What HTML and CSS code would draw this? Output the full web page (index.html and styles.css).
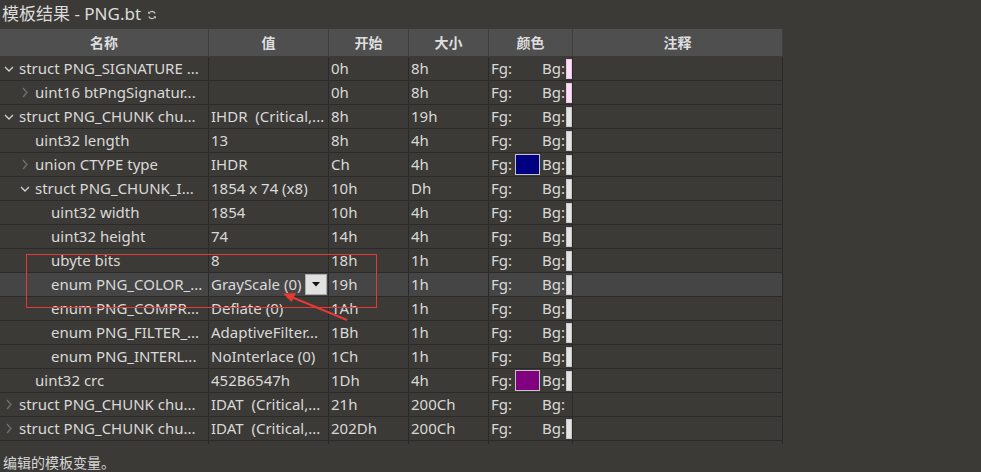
FILE: index.html
```html
<!DOCTYPE html>
<html lang="zh">
<head>
<meta charset="utf-8">
<title>模板结果</title>
<link rel="stylesheet" href="styles.css">
</head>
<body>
<div class="panel">
  <div class="title">模板结果 - PNG.bt
    <svg class="refresh" width="10" height="10" viewBox="0 0 10 10"><path d="M8.2 3.6A3.4 3.4 0 0 0 2.2 3" fill="none" stroke="#bdbdbd" stroke-width="1.3"/><path d="M1.8 6.4A3.4 3.4 0 0 0 7.8 7" fill="none" stroke="#bdbdbd" stroke-width="1.3"/><path d="M1 1.2v2.6h2.6z" fill="#bdbdbd"/><path d="M9 8.8V6.2H6.4z" fill="#bdbdbd"/></svg>
  </div>
  <div class="grid">
    <div class="row head">
      <div class="c">名称</div><div class="c">值</div><div class="c">开始</div><div class="c">大小</div><div class="c">颜色</div><div class="c">注释</div>
    </div>

    <div class="row">
      <div class="c name l0"><span class="tw open"><svg width="10" height="6" viewBox="0 0 10 6"><path d="M1 1l4 4 4-4" fill="none" stroke="currentColor" stroke-width="1.4"/></svg></span>struct PNG_SIGNATURE ...</div>
      <div class="c"></div><div class="c">0h</div><div class="c">8h</div>
      <div class="c col"><span class="fg">Fg:</span><span class="slot"></span><span class="bg">Bg:</span><span class="bsw pink"></span></div><div class="c"></div>
    </div>
    <div class="row">
      <div class="c name l1"><span class="tw shut"><svg width="6" height="11" viewBox="0 0 6 11"><path d="M1 1l4 4.5-4 4.5" fill="none" stroke="currentColor" stroke-width="1.4"/></svg></span>uint16 btPngSignatur...</div>
      <div class="c"></div><div class="c">0h</div><div class="c">8h</div>
      <div class="c col"><span class="fg">Fg:</span><span class="slot"></span><span class="bg">Bg:</span><span class="bsw pink"></span></div><div class="c"></div>
    </div>
    <div class="row">
      <div class="c name l0"><span class="tw open"><svg width="10" height="6" viewBox="0 0 10 6"><path d="M1 1l4 4 4-4" fill="none" stroke="currentColor" stroke-width="1.4"/></svg></span>struct PNG_CHUNK chu...</div>
      <div class="c">IHDR&nbsp; (Critical,...</div><div class="c">8h</div><div class="c">19h</div>
      <div class="c col"><span class="fg">Fg:</span><span class="slot"></span><span class="bg">Bg:</span><span class="bsw"></span></div><div class="c"></div>
    </div>
    <div class="row">
      <div class="c name l1"><span class="tw"></span>uint32 length</div>
      <div class="c">13</div><div class="c">8h</div><div class="c">4h</div>
      <div class="c col"><span class="fg">Fg:</span><span class="slot"></span><span class="bg">Bg:</span><span class="bsw"></span></div><div class="c"></div>
    </div>
    <div class="row">
      <div class="c name l1"><span class="tw shut"><svg width="6" height="11" viewBox="0 0 6 11"><path d="M1 1l4 4.5-4 4.5" fill="none" stroke="currentColor" stroke-width="1.4"/></svg></span>union CTYPE type</div>
      <div class="c">IHDR</div><div class="c">Ch</div><div class="c">4h</div>
      <div class="c col"><span class="fg">Fg:</span><span class="slot"><span class="fsw navy"></span></span><span class="bg">Bg:</span><span class="bsw"></span></div><div class="c"></div>
    </div>
    <div class="row">
      <div class="c name l1"><span class="tw open"><svg width="10" height="6" viewBox="0 0 10 6"><path d="M1 1l4 4 4-4" fill="none" stroke="currentColor" stroke-width="1.4"/></svg></span>struct PNG_CHUNK_I...</div>
      <div class="c">1854 x 74 (x8)</div><div class="c">10h</div><div class="c">Dh</div>
      <div class="c col"><span class="fg">Fg:</span><span class="slot"></span><span class="bg">Bg:</span><span class="bsw"></span></div><div class="c"></div>
    </div>
    <div class="row">
      <div class="c name l2"><span class="tw"></span>uint32 width</div>
      <div class="c">1854</div><div class="c">10h</div><div class="c">4h</div>
      <div class="c col"><span class="fg">Fg:</span><span class="slot"></span><span class="bg">Bg:</span><span class="bsw"></span></div><div class="c"></div>
    </div>
    <div class="row">
      <div class="c name l2"><span class="tw"></span>uint32 height</div>
      <div class="c">74</div><div class="c">14h</div><div class="c">4h</div>
      <div class="c col"><span class="fg">Fg:</span><span class="slot"></span><span class="bg">Bg:</span><span class="bsw"></span></div><div class="c"></div>
    </div>
    <div class="row">
      <div class="c name l2"><span class="tw"></span>ubyte bits</div>
      <div class="c">8</div><div class="c">18h</div><div class="c">1h</div>
      <div class="c col"><span class="fg">Fg:</span><span class="slot"></span><span class="bg">Bg:</span><span class="bsw"></span></div><div class="c"></div>
    </div>
    <div class="row sel">
      <div class="c name l2"><span class="tw"></span>enum PNG_COLOR_...</div>
      <div class="c val-edit"><span>GrayScale (0)</span><span class="drop"><svg width="8" height="5" viewBox="0 0 8 5"><path d="M0 0h8L4 4.5z" fill="#111"/></svg></span></div><div class="c">19h</div><div class="c">1h</div>
      <div class="c col"><span class="fg">Fg:</span><span class="slot"></span><span class="bg">Bg:</span><span class="bsw"></span></div><div class="c"></div>
    </div>
    <div class="row">
      <div class="c name l2"><span class="tw"></span>enum PNG_COMPR...</div>
      <div class="c">Deflate (0)</div><div class="c">1Ah</div><div class="c">1h</div>
      <div class="c col"><span class="fg">Fg:</span><span class="slot"></span><span class="bg">Bg:</span><span class="bsw"></span></div><div class="c"></div>
    </div>
    <div class="row">
      <div class="c name l2"><span class="tw"></span>enum PNG_FILTER_...</div>
      <div class="c">AdaptiveFilter...</div><div class="c">1Bh</div><div class="c">1h</div>
      <div class="c col"><span class="fg">Fg:</span><span class="slot"></span><span class="bg">Bg:</span><span class="bsw"></span></div><div class="c"></div>
    </div>
    <div class="row">
      <div class="c name l2"><span class="tw"></span>enum PNG_INTERL...</div>
      <div class="c">NoInterlace (0)</div><div class="c">1Ch</div><div class="c">1h</div>
      <div class="c col"><span class="fg">Fg:</span><span class="slot"></span><span class="bg">Bg:</span><span class="bsw"></span></div><div class="c"></div>
    </div>
    <div class="row">
      <div class="c name l1"><span class="tw"></span>uint32 crc</div>
      <div class="c">452B6547h</div><div class="c">1Dh</div><div class="c">4h</div>
      <div class="c col"><span class="fg">Fg:</span><span class="slot"><span class="fsw purple"></span></span><span class="bg">Bg:</span><span class="bsw"></span></div><div class="c"></div>
    </div>
    <div class="row">
      <div class="c name l0"><span class="tw shut"><svg width="6" height="11" viewBox="0 0 6 11"><path d="M1 1l4 4.5-4 4.5" fill="none" stroke="currentColor" stroke-width="1.4"/></svg></span>struct PNG_CHUNK chu...</div>
      <div class="c">IDAT&nbsp; (Critical,...</div><div class="c">21h</div><div class="c">200Ch</div>
      <div class="c col"><span class="fg">Fg:</span><span class="slot"></span><span class="bg">Bg:</span></div><div class="c"></div>
    </div>
    <div class="row">
      <div class="c name l0"><span class="tw shut"><svg width="6" height="11" viewBox="0 0 6 11"><path d="M1 1l4 4.5-4 4.5" fill="none" stroke="currentColor" stroke-width="1.4"/></svg></span>struct PNG_CHUNK chu...</div>
      <div class="c">IDAT&nbsp; (Critical,...</div><div class="c">202Dh</div><div class="c">200Ch</div>
      <div class="c col"><span class="fg">Fg:</span><span class="slot"></span><span class="bg">Bg:</span><span class="bsw"></span></div><div class="c"></div>
    </div>
    <div class="row tail">
      <div class="c"></div><div class="c"></div><div class="c"></div><div class="c"></div><div class="c"></div><div class="c"></div>
    </div>

    <div class="mark"></div>
    <svg class="arrow" width="120" height="60" viewBox="0 0 120 60"><path d="M70 36L12 12" stroke="#e53935" stroke-width="2" fill="none"/><path d="M6 9.5l13 -0.5-4.5 9z" fill="#e53935"/></svg>
  </div>
  <div class="status">编辑的模板变量。</div>
</div>
</body>
</html>
```
FILE: styles.css
```css
* { box-sizing: border-box; }
html, body { margin: 0; padding: 0; }
body {
  background: #3c3a36;
  color: #d9d9d9;
  font-family: "Noto Sans", "Noto Sans CJK SC", sans-serif;
  font-size: 15px;
  width: 981px;
  height: 472px;
  overflow: hidden;
}
.panel { display: flex; flex-direction: column; }
.title {
  height: 29px;
  padding: 0 0 1px 2px;
  font-size: 17px;
  line-height: 26px;
  color: #dcdcdc;
  display: flex;
  align-items: center;
  gap: 6px;
}
.refresh { margin-top: 1px; }
.grid { position: relative; width: 783px; }
.row {
  display: grid;
  grid-template-columns: 209px 120px 80px 80px 84px 210px;
  height: 24px;
}
.c {
  border-right: 1px solid #2b2a28;
  border-bottom: 1px solid #2b2a28;
  padding-left: 2px;
  line-height: 23px;
  white-space: nowrap;
  overflow: hidden;
  display: flex;
  align-items: center;
}
.head { height: 28px; background: #4f4f4f; }
.head .c {
  justify-content: center;
  font-weight: bold;
  border-right: 1px solid #3f3f3f;
  border-bottom: 1px solid #3a3a3a;
  padding-left: 0;
  color: #dedede;
  font-size: 14px;
}
.sel { background: #454545; }
.tail { height: 3px; }
.tail .c { border-bottom: none; }
.name { padding-left: 0; }
.l1 { padding-left: 16px; }
.l2 { padding-left: 32px; }
.tw { width: 19px; flex: none; display: flex; align-items: center; }
.tw.open { color: #cfcfcf; padding-left: 4px; }
.tw.shut { color: #6f6f6f; padding-left: 6px; }
.col { padding-left: 2px; }
.fg { width: 24px; flex: none; }
.slot { width: 27px; flex: none; height: 23px; display: flex; align-items: center; }
.bg { width: 24px; flex: none; }
.bsw {
  width: 6px; height: 20px; flex: none;
  background: #e4e4e4;
  border: 1px solid #c8c8c8;
}
.bsw.pink { background: #fde0f8; border-color: #e8c8e4; }
.fsw { width: 25px; height: 21px; border: 1px solid #c4c4c4; }
.navy { background: #000080; }
.purple { background: #800080; }
.val-edit { position: relative; }
.drop {
  position: absolute;
  left: 96px; top: 1px;
  width: 22px; height: 21px;
  background: #e1e1e1;
  border: 1px solid #adadad;
  display: flex; align-items: center; justify-content: center;
}
.mark {
  position: absolute;
  left: 26px; top: 225px;
  width: 351px; height: 54px;
  border: 1.5px solid #e53935;
}
.arrow { position: absolute; left: 277px; top: 255px; }
.status {
  padding: 8px 0 0 3px;
  font-family: "Noto Sans CJK SC", sans-serif;
  font-size: 14px;
  color: #d6d6d6;
}
```
